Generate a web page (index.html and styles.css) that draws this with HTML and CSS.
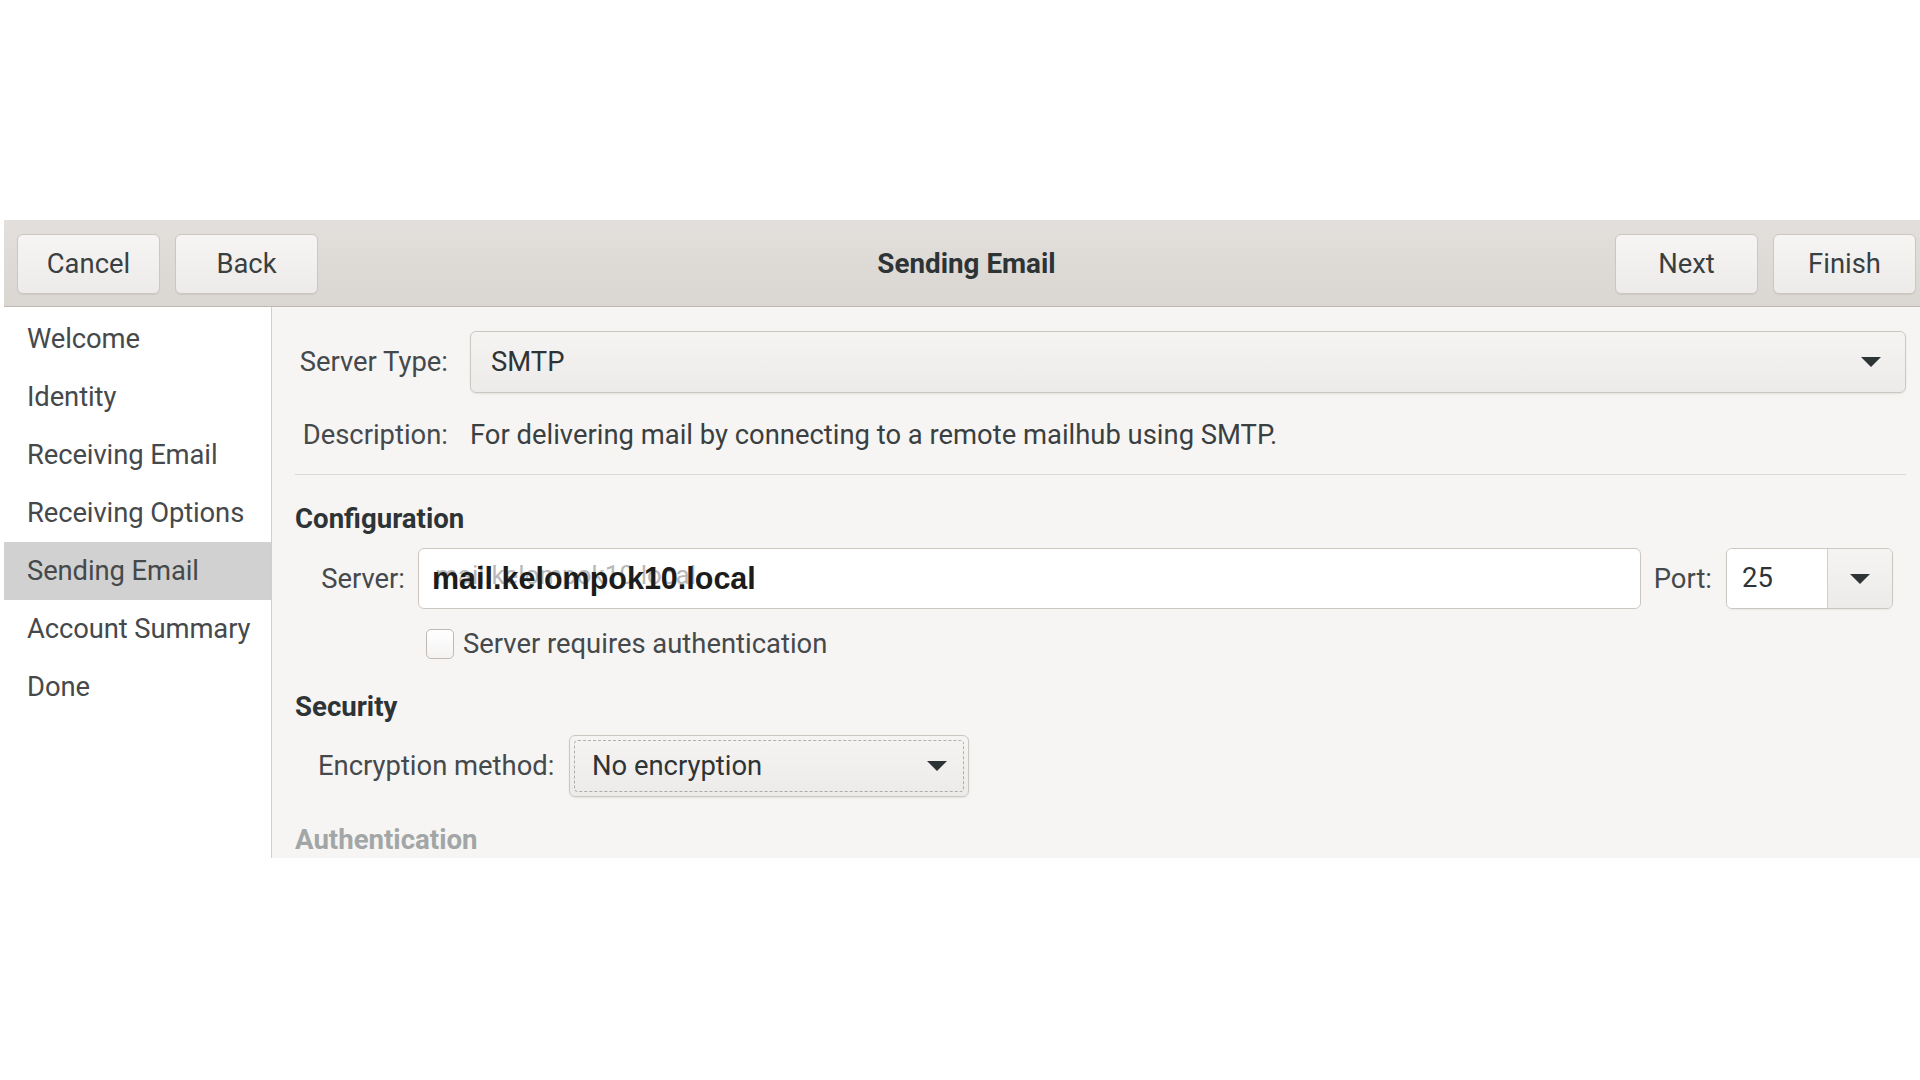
FILE: index.html
```html
<!DOCTYPE html>
<html lang="en">
<head>
<meta charset="utf-8">
<title>Sending Email</title>
<link rel="stylesheet" href="styles.css">
</head>
<body>
<div class="window">
  <header class="headerbar">
    <div class="hb-left">
      <button class="btn">Cancel</button>
      <button class="btn">Back</button>
    </div>
    <div class="hb-title">Sending Email</div>
    <div class="hb-right">
      <button class="btn">Next</button>
      <button class="btn">Finish</button>
    </div>
  </header>
  <div class="body">
    <nav class="sidebar">
      <div class="side-item">Welcome</div>
      <div class="side-item">Identity</div>
      <div class="side-item">Receiving Email</div>
      <div class="side-item">Receiving Options</div>
      <div class="side-item active">Sending Email</div>
      <div class="side-item">Account Summary</div>
      <div class="side-item">Done</div>
    </nav>
    <main class="content">
      <div class="type-grid">
        <div class="lbl">Server Type:</div>
        <div class="combo wide">
          <span>SMTP</span>
          <span class="arrow"></span>
        </div>
        <div class="lbl desc-lbl">Description:</div>
        <div class="desc">For delivering mail by connecting to a remote mailhub using SMTP.</div>
      </div>
      <div class="sep"></div>
      <h2 class="heading">Configuration</h2>
      <div class="server-row">
        <div class="lbl srv-lbl">Server:</div>
        <div class="entry">
          <span class="ghost">mail.kelompok10.local</span>
          <span class="entry-text">mail.kelompok10.local</span>
        </div>
        <div class="lbl">Port:</div>
        <div class="spin">
          <div class="spin-val">25</div>
          <div class="spin-btn"><span class="arrow"></span></div>
        </div>
      </div>
      <label class="check-row">
        <span class="checkbox"></span>
        <span>Server requires authentication</span>
      </label>
      <h2 class="heading sec">Security</h2>
      <div class="enc-row">
        <div class="lbl enc-lbl">Encryption method:</div>
        <div class="combo enc">
          <div class="focus">
            <span>No encryption</span>
            <span class="arrow"></span>
          </div>
        </div>
      </div>
      <h2 class="heading auth">Authentication</h2>
    </main>
  </div>
</div>
</body>
</html>
```
FILE: styles.css
```css
html, body {
  margin: 0;
  padding: 0;
  background: #ffffff;
}
body {
  font-family: Roboto, "Noto Sans", sans-serif;
  font-size: 27.4px;
  color: #2e3436;
  width: 1920px;
  height: 1080px;
  overflow: hidden;
}
.window {
  margin-top: 220px;
  margin-left: 4px;
  width: 1916px;
  height: 638px;
  display: flex;
  flex-direction: column;
  overflow: hidden;
  background: #f6f5f4;
}
.headerbar {
  height: 87px;
  box-sizing: border-box;
  border-bottom: 1px solid #bfb8b1;
  background: linear-gradient(#e2dfdc, #dad6d2);
  padding: 14px 4px 0 13px;
  display: grid;
  grid-template-columns: 1fr auto 1fr;
  align-items: start;
  flex: none;
}
.hb-left, .hb-right {
  display: flex;
  gap: 15px;
}
.hb-right { justify-content: flex-end; }
.hb-title {
  font-weight: 700;
  font-size: 27.8px;
  line-height: 60px;
  color: #2e3436;
}
.btn {
  width: 143px;
  height: 60px;
  font-family: Roboto, "Noto Sans", sans-serif;
  font-size: 27.4px;
  color: #3a3f41;
  background: linear-gradient(#f6f5f4, #edebe9);
  border: 1px solid #cdc7c2;
  border-radius: 6px;
  box-shadow: 0 1px 1px rgba(0,0,0,0.07);
  padding: 0;
}
.body {
  flex: 1;
  display: flex;
  min-height: 0;
}
.sidebar {
  width: 267px;
  flex: none;
  background: #ffffff;
  border-right: 1px solid #d3cec9;
  padding-top: 3px;
}
.side-item {
  height: 58px;
  line-height: 58px;
  padding-left: 23px;
  color: #45494b;
  letter-spacing: -0.1px;
}
.side-item.active {
  background: #d1d1d1;
}
.content {
  flex: 1;
  padding: 24px 14px 0 23px;
  min-width: 0;
}
.lbl {
  color: #45494b;
  white-space: nowrap;
}
.type-grid {
  display: grid;
  grid-template-columns: 153px 1fr;
  column-gap: 22px;
  row-gap: 24px;
  align-items: center;
}
.type-grid .lbl { text-align: right; }
.combo {
  box-sizing: border-box;
  height: 62px;
  border: 1px solid #cdc7c2;
  border-radius: 6px;
  background: linear-gradient(#f5f4f3, #edebe9);
  box-shadow: 0 1px 2px rgba(0,0,0,0.08);
  display: flex;
  align-items: center;
  justify-content: space-between;
  padding: 0 24px 0 20px;
  color: #2e3436;
}
.arrow {
  width: 0;
  height: 0;
  border-left: 10px solid transparent;
  border-right: 10px solid transparent;
  border-top: 10px solid #2e3436;
}
.desc {
  line-height: 36px;
  color: #3a3f41;
}
.desc-lbl { line-height: 36px; }
.sep {
  height: 1px;
  background: #dcd8d4;
  margin-top: 21px;
}
.heading {
  margin: 26px 0 0;
  font-size: 27.6px;
  font-weight: 700;
  line-height: 36px;
  color: #2e3436;
}
.server-row {
  margin-top: 11px;
  margin-left: 22px;
  margin-right: 13px;
  display: flex;
  align-items: center;
  gap: 13px;
}
.srv-lbl { width: 88px; text-align: right; flex: none; }
.entry {
  position: relative;
  flex: 1;
  box-sizing: border-box;
  height: 61px;
  background: #ffffff;
  border: 1px solid #cdc7c2;
  border-radius: 6px;
  display: flex;
  align-items: center;
  padding-left: 13px;
}
.entry-text {
  position: relative;
  font-family: "Liberation Sans", Arial, sans-serif;
  font-weight: 700;
  font-size: 30.5px;
  color: #1c1c1c;
}
.ghost {
  position: absolute;
  left: 16px;
  top: 11px;
  color: #b9b9b9;
  font-size: 26px;
}
.spin {
  display: flex;
  box-sizing: border-box;
  height: 61px;
  width: 167px;
  border: 1px solid #cdc7c2;
  border-radius: 6px;
  overflow: hidden;
  margin-left: 1px;
  box-shadow: 0 1px 2px rgba(0,0,0,0.06);
}
.spin-val {
  flex: 1;
  background: #ffffff;
  padding-left: 15px;
  line-height: 59px;
  color: #2e3436;
}
.spin-btn {
  width: 64px;
  border-left: 1px solid #d3cec9;
  background: linear-gradient(#f5f4f3, #edebe9);
  display: flex;
  align-items: center;
  justify-content: center;
}
.check-row {
  display: flex;
  align-items: center;
  gap: 9px;
  margin-top: 19px;
  margin-left: 131px;
  color: #45494b;
}
.checkbox {
  width: 28px;
  height: 30px;
  box-sizing: border-box;
  border: 1px solid #c0b9b3;
  border-radius: 5px;
  background: linear-gradient(#ffffff, #f4f3f2);
}
.heading.sec { margin-top: 29px; }
.enc-row {
  margin-top: 10px;
  margin-left: 23px;
  display: flex;
  align-items: center;
  gap: 14px;
}
.enc-lbl { width: 237px; flex: none; }
.combo.enc {
  width: 400px;
  padding: 4px;
}
.focus {
  flex: 1;
  height: 100%;
  box-sizing: border-box;
  border: 1px dashed rgba(46,52,54,0.35);
  border-radius: 4px;
  display: flex;
  align-items: center;
  justify-content: space-between;
  padding: 0 16px 0 17px;
}
.heading.auth {
  margin-top: 25px;
  color: #a3a6a6;
}
```
